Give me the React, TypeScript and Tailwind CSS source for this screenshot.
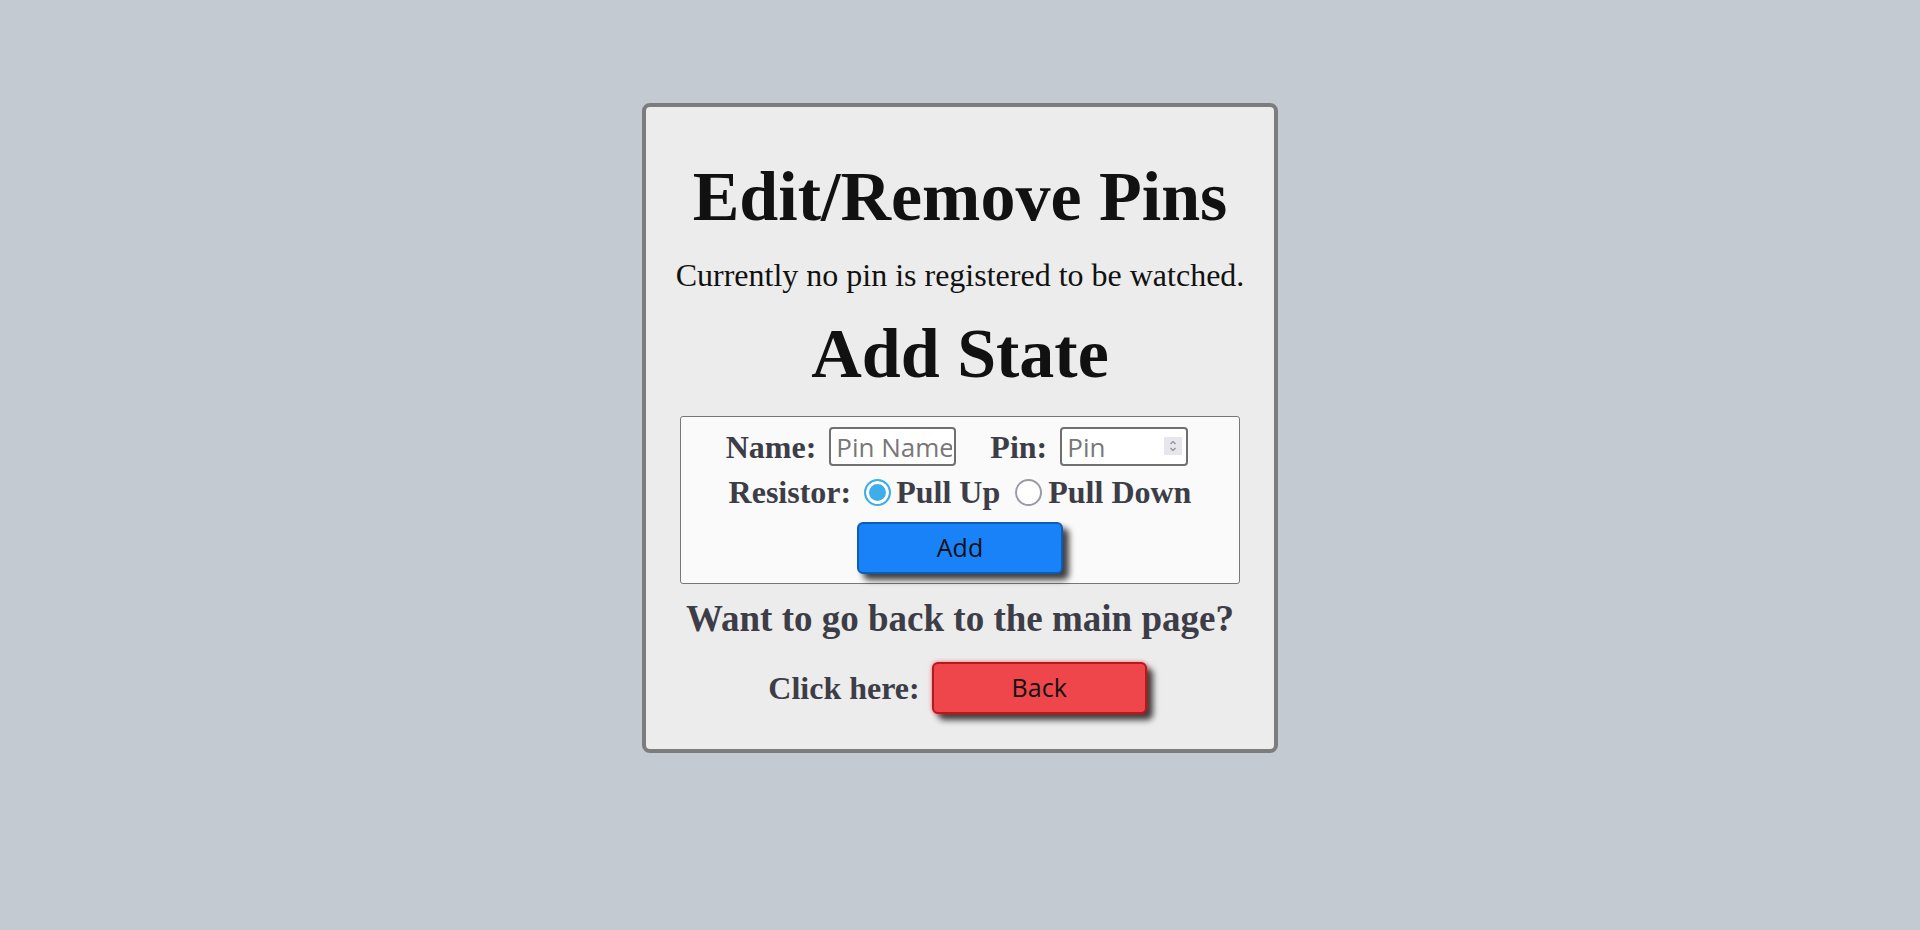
import React from "react";

const serif = "font-['Liberation_Serif','Times_New_Roman',serif]";
const sans = "font-['Open_Sans','Noto_Sans',sans-serif]";

function Chevrons() {
  return (
    <svg width="18" height="18" viewBox="0 0 18 18" fill="none">
      <path d="M6.5 7 L9 4.5 L11.5 7" stroke="#8a8a95" strokeWidth="1.1" />
      <path d="M6.5 11 L9 13.5 L11.5 11" stroke="#8a8a95" strokeWidth="1.1" />
    </svg>
  );
}

export default function App() {
  return (
    <div className="min-h-screen w-full bg-[#c3cad2] flex justify-center pt-[103px]">
      <div className="w-[636px] h-[650px] border-4 border-[#7c7c7c] rounded-[8px] bg-[#ececec] flex flex-col items-center pt-[50px]">
        <h1 className={`${serif} text-[70px] leading-[80px] font-bold text-[#111111] whitespace-nowrap`}>
          Edit/Remove Pins
        </h1>
        <p className={`${serif} mt-[18px] text-[32px] leading-[40px] text-[#111111] whitespace-nowrap`}>
          Currently no pin is registered to be watched.
        </p>
        <h2 className={`${serif} mt-[19px] text-[70px] leading-[80px] font-bold text-[#111111] whitespace-nowrap`}>
          Add State
        </h2>
        <div className="mt-[22px] w-[560px] h-[168px] border border-[#777777] rounded-[3px] bg-[#fafafa] flex flex-col items-center pt-[10px]">
          <div className="flex items-center h-[39px] -ml-[6px]">
            <span className={`${serif} text-[32px] leading-[40px] font-bold text-[#3d3d47]`}>Name:</span>
            <input
              type="text"
              placeholder="Pin Name"
              className={`${sans} ml-[13px] w-[127px] h-[39px] border-2 border-[#707070] rounded-[4px] bg-white pl-[5px] pr-[2px] pt-[2px] text-[26px] text-[#222] placeholder:text-[#777777] outline-none`}
            />
            <span className={`${serif} ml-[34px] text-[32px] leading-[40px] font-bold text-[#3d3d47]`}>Pin:</span>
            <div className="relative ml-[13px]">
              <input
                type="text"
                placeholder="Pin"
                className={`${sans} w-[128px] h-[39px] border-2 border-[#707070] rounded-[4px] bg-white pl-[5px] pr-[2px] pt-[2px] text-[26px] text-[#222] placeholder:text-[#777777] outline-none`}
              />
              <div className="absolute right-[6px] top-[10px] w-[18px] h-[18px] bg-[#e6e6ec] flex items-center justify-center">
                <Chevrons />
              </div>
            </div>
          </div>
          <div className="mt-[6px] flex items-center h-[40px]">
            <span className={`${serif} text-[32px] leading-[40px] font-bold text-[#3d3d47]`}>Resistor:</span>
            <label className="ml-[13px] flex items-center">
              <input
                type="radio"
                name="resistor"
                defaultChecked
                className="appearance-none w-[27px] h-[27px] rounded-full border-2 border-[#9a9aa6] bg-white checked:border-[#3daee9] checked:bg-[#3daee9] checked:shadow-[inset_0_0_0_3px_white] m-0"
              />
              <span className={`${serif} ml-[5px] text-[32px] leading-[40px] font-bold text-[#3d3d47]`}>Pull Up</span>
            </label>
            <label className="ml-[15px] flex items-center">
              <input
                type="radio"
                name="resistor"
                className="appearance-none w-[27px] h-[27px] rounded-full border-2 border-[#9a9aa6] bg-white checked:border-[#3daee9] checked:bg-[#3daee9] checked:shadow-[inset_0_0_0_3px_white] m-0"
              />
              <span className={`${serif} ml-[6px] text-[32px] leading-[40px] font-bold text-[#3d3d47]`}>Pull Down</span>
            </label>
          </div>
          <button
            className={`${sans} mt-[10px] w-[206px] h-[52px] bg-[#1a82f8] border-2 border-[#0c5cb8] rounded-[6px] text-[25px] text-[#111111] shadow-[6px_6px_6px_rgba(0,0,0,0.75)]`}
          >
            Add
          </button>
        </div>
        <p className={`${serif} mt-[13px] text-[37px] leading-[44px] font-bold text-[#3d3d47] whitespace-nowrap`}>
          Want to go back to the main page?
        </p>
        <div className="mt-[21px] flex items-center -ml-[5px]">
          <span className={`${serif} text-[32px] leading-[40px] font-bold text-[#3d3d47]`}>Click here:</span>
          <button
            className={`${sans} ml-[12px] w-[215px] h-[52px] bg-[#ee464a] border-2 border-[#b8171b] rounded-[6px] text-[25px] text-[#111111] shadow-[0_0_4px_rgba(220,30,30,0.6),6px_6px_6px_rgba(0,0,0,0.75)]`}
          >
            Back
          </button>
        </div>
      </div>
    </div>
  );
}
